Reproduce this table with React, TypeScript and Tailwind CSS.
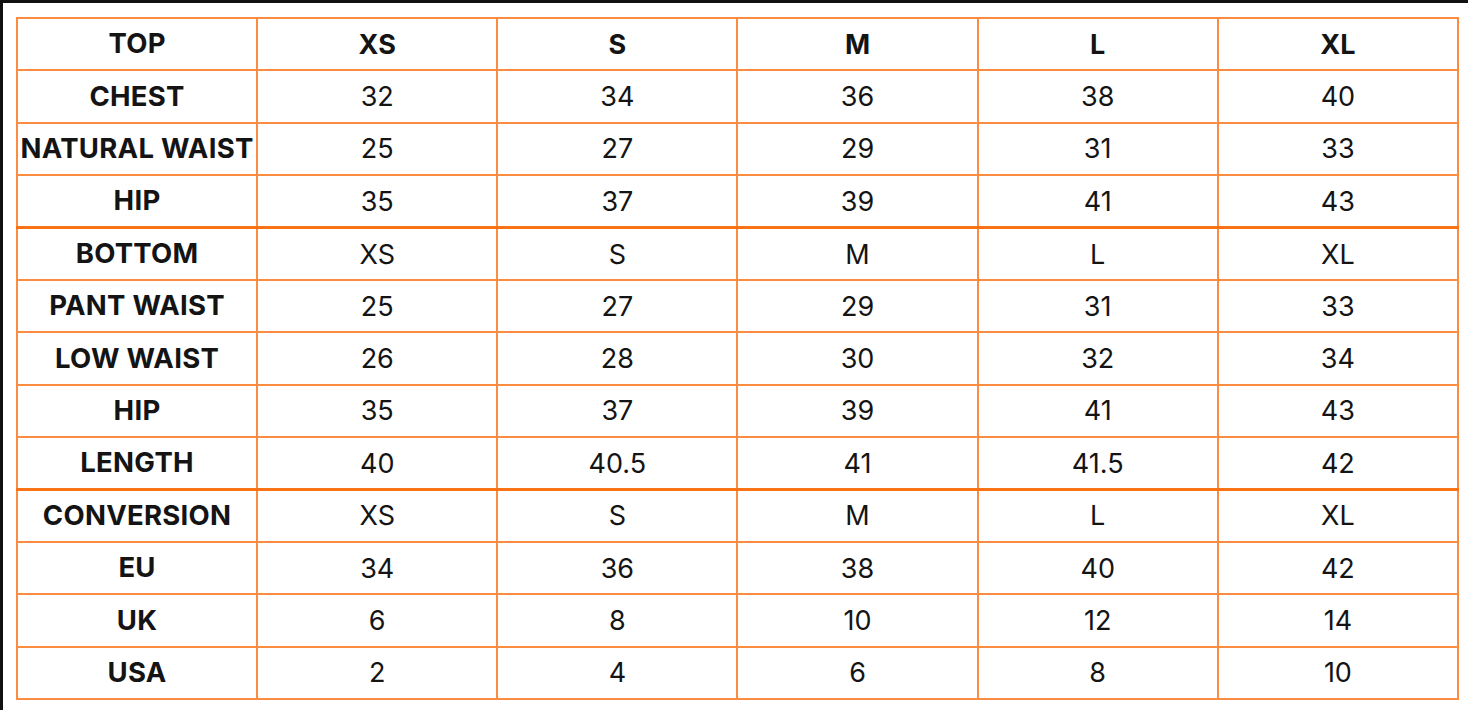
const sizes = ["XS", "S", "M", "L", "XL"];

type Row = { label: string; values: string[]; head?: boolean; thickTop?: boolean };

const rows: Row[] = [
  { label: "TOP", values: sizes, head: true },
  { label: "CHEST", values: ["32", "34", "36", "38", "40"] },
  { label: "NATURAL WAIST", values: ["25", "27", "29", "31", "33"] },
  { label: "HIP", values: ["35", "37", "39", "41", "43"] },
  { label: "BOTTOM", values: sizes, thickTop: true },
  { label: "PANT WAIST", values: ["25", "27", "29", "31", "33"] },
  { label: "LOW WAIST", values: ["26", "28", "30", "32", "34"] },
  { label: "HIP", values: ["35", "37", "39", "41", "43"] },
  { label: "LENGTH", values: ["40", "40.5", "41", "41.5", "42"] },
  { label: "CONVERSION", values: sizes, thickTop: true },
  { label: "EU", values: ["34", "36", "38", "40", "42"] },
  { label: "UK", values: ["6", "8", "10", "12", "14"] },
  { label: "USA", values: ["2", "4", "6", "8", "10"] },
];

export default function App() {
  return (
    <div className="w-[1468px] h-[710px] bg-white border-t-[3px] border-l-[3px] border-[#111] pt-[14px] pl-[13px] overflow-hidden">
      <table
        className="w-[1443px] table-fixed border-collapse text-[#141414] text-[27px]"
        style={{ fontFamily: "Inter, 'Noto Sans', sans-serif" }}
      >
        <tbody>
          {rows.map((row, i) => (
            <tr
              key={i}
              className={`h-[52.4px] ${
                row.thickTop ? "border-t-[3px] border-t-[#f97316]" : ""
              }`}
            >
              <td className="border-2 border-[#fb8c42] text-center font-bold leading-none px-0 tracking-[0.01em] text-[27.5px]">
                {row.label}
              </td>
              {row.values.map((v, j) => (
                <td
                  key={j}
                  className={`border-2 border-[#fb8c42] text-center leading-none ${
                    row.head ? "font-bold" : "font-normal"
                  }`}
                >
                  {v}
                </td>
              ))}
            </tr>
          ))}
        </tbody>
      </table>
    </div>
  );
}
